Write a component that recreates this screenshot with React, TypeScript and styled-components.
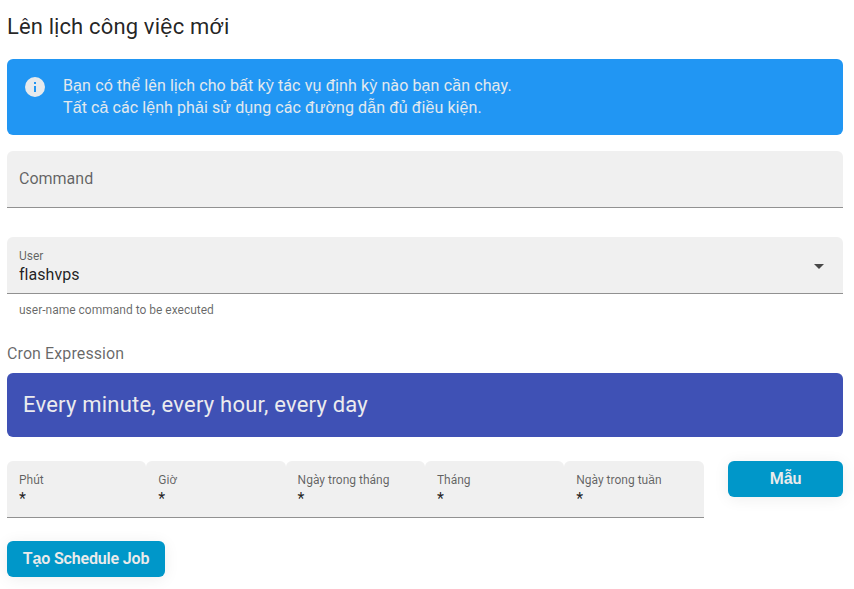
import React from 'react';
import styled, { createGlobalStyle } from 'styled-components';

const Global = createGlobalStyle`
  *{box-sizing:border-box}
  body{margin:0;background:#fff;font-family:Roboto,sans-serif;font-size:16px;color:rgba(0,0,0,.87)}
`;
const Page = styled.main`width:854px;height:589px;padding:0 11px 0 7px;overflow:hidden;`;
const Title = styled.h1`margin:0;padding-top:10px;height:59px;font-weight:400;font-size:22px;line-height:33px;letter-spacing:.17px;`;
const Alert = styled.section`display:flex;height:76px;padding:16px;border-radius:6px;background:#2196f3;color:#e3e9ee;`;
const InfoIcon = styled.svg`width:24px;height:24px;margin-right:16px;fill:#e6eaed;`;
const AlertText = styled.p`margin:0;line-height:22px;`;
const AlertLine = styled.span<{ $tracking: number }>`display:block;letter-spacing:${p => p.$tracking}px;`;
const Field = styled.div<{ $top: number }>`height:57px;margin-top:${p => p.$top}px;padding:0 12px;display:flex;align-items:center;justify-content:space-between;background:#f0f0f0;border-bottom:1px solid #919191;border-radius:6px 6px 0 0;`;
const Placeholder = styled.span`padding-bottom:2px;color:rgba(0,0,0,.6);`;
const Stack = styled.div`align-self:flex-start;padding-top:11px;`;
const Label = styled.div`font-size:12px;line-height:16px;color:rgba(0,0,0,.6);white-space:nowrap;`;
const Value = styled.div`line-height:22px;letter-spacing:.04px;`;
const Arrow = styled.svg`width:24px;height:24px;margin-top:2px;fill:rgba(0,0,0,.7);`;
const Hint = styled.div`font-size:12px;line-height:16px;padding:8px 12px 0;color:rgba(0,0,0,.6);`;
const Caption = styled.div`margin-top:25px;line-height:20px;height:30px;padding-top:1px;letter-spacing:.1px;color:rgba(0,0,0,.6);`;
const Banner = styled.div`height:64px;padding:0 16px;border-radius:6px;background:#3f51b5;color:#ebebee;font-size:22px;line-height:64px;letter-spacing:.22px;`;
const CronRow = styled.div`display:flex;gap:24px;margin-top:24px;`;
const CronFields = styled.div`display:grid;grid-template-columns:repeat(4,139.3px) 1fr;width:697px;`;
const Button = styled.button<{ $width: number }>`width:${p => p.$width}px;height:36px;padding:0;border:0;border-radius:6px;background:#0097c9;color:#ebebeb;font:600 16px/36px Roboto,sans-serif;letter-spacing:-.16px;box-shadow:0 2px 16px rgba(0,0,0,.07);`;
const Footer = styled.div`margin-top:23px;`;
const Accented = styled.span`font-family:"Liberation Sans",sans-serif;line-height:1;`;

const extendedLatin = /([\u0102-\u0110\u0112-\u01ff\u1e00-\u1eff]+)/;

function Vietnamese({ text }: { text: string }) {
  return <>{text.split(extendedLatin).map((part, i) => (i % 2 ? <Accented key={i}>{part}</Accented> : part))}</>;
}

const cronLabels = ['Phút', 'Giờ', 'Ngày trong tháng', 'Tháng', 'Ngày trong tuần'];

export default function App() {
  return (
    <Page>
      <Global />
      <Title><Vietnamese text="Lên lịch công việc mới" /></Title>
      <Alert>
        <InfoIcon viewBox="0 0 24 24"><path d="M12 2a10 10 0 1 0 0 20 10 10 0 0 0 0-20zm1 15h-2v-6h2zm0-8h-2V7h2z" /></InfoIcon>
        <AlertText>
          <AlertLine $tracking={0.115}><Vietnamese text="Bạn có thể lên lịch cho bất kỳ tác vụ định kỳ nào bạn cần chạy." /></AlertLine>
          <AlertLine $tracking={0.08}><Vietnamese text="Tất cả các lệnh phải sử dụng các đường dẫn đủ điều kiện." /></AlertLine>
        </AlertText>
      </Alert>
      <Field $top={16}><Placeholder>Command</Placeholder></Field>
      <Field $top={29}>
        <Stack><Label>User</Label><Value>flashvps</Value></Stack>
        <Arrow viewBox="0 0 24 24"><path d="m7 10 5 5 5-5z" /></Arrow>
      </Field>
      <Hint>user-name command to be executed</Hint>
      <Caption>Cron Expression</Caption>
      <Banner>Every minute, every hour, every day</Banner>
      <CronRow>
        <CronFields>
          {cronLabels.map(label => (
            <Field $top={0} key={label}>
              <Stack><Label><Vietnamese text={label} /></Label><Value>*</Value></Stack>
            </Field>
          ))}
        </CronFields>
        <Button $width={115}><Vietnamese text="Mẫu" /></Button>
      </CronRow>
      <Footer><Button $width={158}><Vietnamese text="Tạo Schedule Job" /></Button></Footer>
    </Page>
  );
}
